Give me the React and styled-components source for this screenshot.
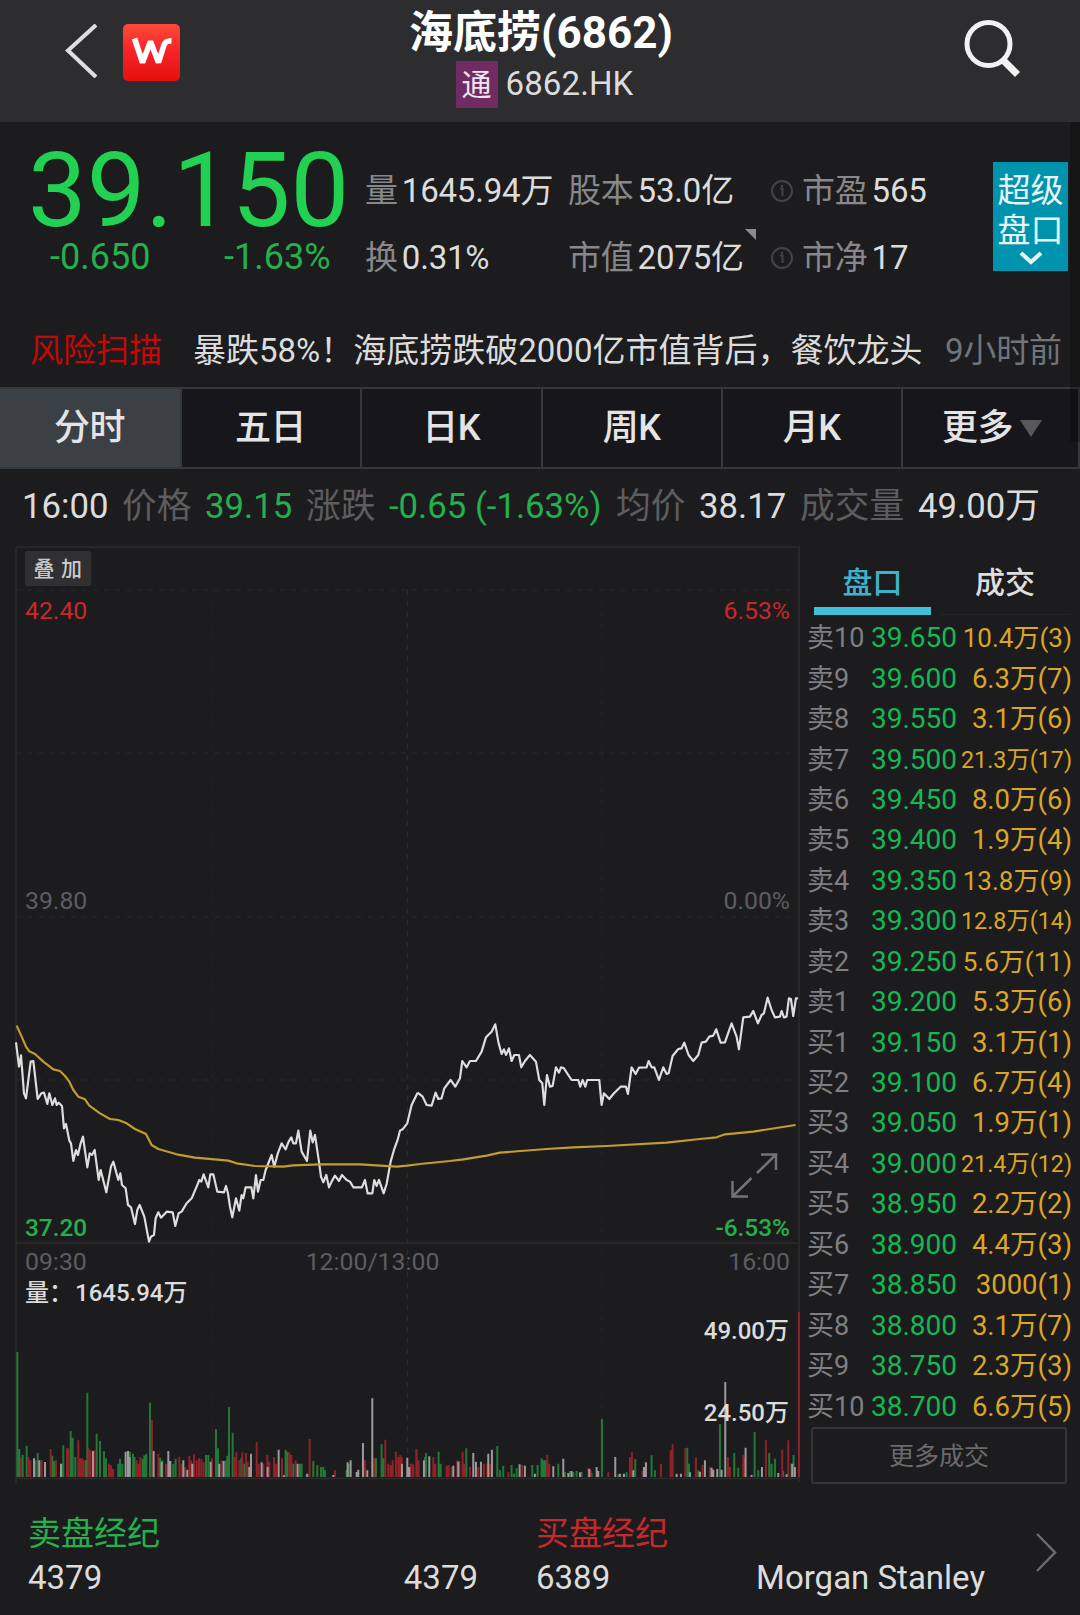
import React from 'react';
import styled, { createGlobalStyle } from 'styled-components';

const GlobalStyle = createGlobalStyle`
  * { box-sizing: border-box; }
  body {
    margin: 0;
    background: #1c1c1e;
    color: #dcdcdd;
    font-family: Roboto, 'Noto Sans CJK SC', sans-serif;
  }
`

const colors = {
  green: '#24b04c',
  red: '#c8282c',
  white: '#dcdcdd',
  grey: '#5d5d5f',
  grid: '#2b2b2d'
}

const Page = styled.div`
  width: 1080px;
  height: 1615px;
  display: flex;
  flex-direction: column;
  position: relative;
  overflow: hidden;
  white-space: nowrap;
`

const ScrollThumb = styled.div`
  position: absolute;
  top: 122px;
  right: 0;
  width: 10px;
  height: 320px;
  background: rgba(0, 0, 0, 0.25);
`

const Header = styled.header`
  height: 122px;
  flex: none;
  display: grid;
  grid-template-columns: 340px 1fr 340px;
  background: #2d2d2f;
`

const HeaderLeft = styled.div`
  display: flex;
  align-items: flex-start;
  padding: 24px 0 0 64px;
  gap: 23px;
`

const Logo = styled.div`
  width: 57px;
  height: 57px;
  border-radius: 5px;
  background: linear-gradient(#fb4c36, #f5222a 50%, #e60f0c);
`

const HeaderCenter = styled.div`
  padding-top: 10px;
  padding-left: 2px;
  display: flex;
  flex-direction: column;
  align-items: center;
`

const Title = styled.h1`
  margin: 0;
  font-size: 44px;
  line-height: 46px;
  font-weight: 700;
  color: #fff;
`

const Ticker = styled.div`
  margin-top: 4px;
  padding-left: 7px;
  display: flex;
  align-items: center;
  gap: 8px;
  font-size: 33px;
  line-height: 48px;
  letter-spacing: 0.1px;
`

const ConnectBadge = styled.span`
  width: 42px;
  height: 47px;
  text-align: center;
  background: #702b62;
  color: #f0e4ee;
  font-size: 30px;
  line-height: 48px;
`

const HeaderRight = styled.div`
  display: flex;
  justify-content: flex-end;
  padding: 17px 57px 0 0;
`

const Quote = styled.section`
  height: 193px;
  flex: none;
  display: grid;
  grid-template-columns: 365px 203px 203px 222px 75px;
`

const PriceBlock = styled.div`
  padding: 14px 0 0 28px;
`

const Price = styled.div`
  font-size: 104.5px;
  line-height: 110px;
  color: #22d152;
`

const Change = styled.div`
  display: grid;
  grid-template-columns: 174px auto;
  padding-left: 22px;
  font-size: 36px;
  line-height: 22px;
  color: ${colors.green};
`

const StatColumn = styled.div`
  padding-top: 35px;
`

const Stat = styled.div`
  display: flex;
  align-items: center;
  position: relative;
  height: 67px;
  font-size: 33px;
  line-height: 40px;
`

const StatLabel = styled.span`
  margin-right: 4px;
  color: #88888b;
  letter-spacing: -0.2px;
`

const StatValue = styled.span`
  letter-spacing: -0.2px;
`

const InfoIcon = styled.svg`
  width: 22px;
  height: 22px;
  margin-right: 9px;
`

const Corner = styled.i`
  position: absolute;
  left: 177px;
  top: 5px;
  border-top: 11px solid #8b8b8d;
  border-left: 11px solid transparent;
`

const SuperBook = styled.div`
  margin-top: 40px;
  height: 109px;
  padding-top: 9px;
  display: flex;
  flex-direction: column;
  align-items: center;
  background: #0093ad;
  color: #e6f6f8;
  font-size: 33px;
  line-height: 40px;
`

const News = styled.section`
  height: 72px;
  flex: none;
  display: grid;
  grid-template-columns: 163px 752px auto;
  padding-left: 30px;
  align-items: center;
  font-size: 33px;
  line-height: 40px;
`

const Risk = styled.span`
  color: #c40806;
`

const NewsTime = styled.span`
  color: #70747b;
  letter-spacing: -0.2px;
`

const Tabs = styled.nav`
  height: 82px;
  flex: none;
  display: grid;
  grid-template-columns: 182px 180px 181px 180px 180px 177px;
  border-top: 2px solid #37373b;
  border-bottom: 2px solid #37373b;
`

const Tab = styled.div`
  display: flex;
  align-items: center;
  justify-content: center;
  gap: 7px;
  padding-right: ${({ more }) => more ? 0 : 1}px;
  padding-left: ${({ more }) => more ? 3 : 0}px;
  border-right: 2px solid #37373b;
  background: ${({ active }) => active ? '#3b4044' : '#17171b'};
  color: #e4e4e5;
  font-size: 36px;
  line-height: 40px;
  font-weight: 500;
  letter-spacing: -0.5px;
`

const Caret = styled.i`
  border: 11px solid transparent;
  border-top: 17px solid #58585b;
  border-bottom: 0;
`

const Readout = styled.section`
  height: 71px;
  flex: none;
  display: grid;
  grid-template-columns: 100px 83px 101px 83px 86px 141px 83px 101px 118px auto;
  align-items: center;
  padding: 3px 0 0 22px;
  font-size: 34.7px;
  line-height: 40px;
`

const ReadoutItem = styled.span`
  color: ${({ color }) => color || colors.white};
`

const Main = styled.main`
  height: 960px;
  flex: none;
  display: grid;
  grid-template-columns: 806px 274px;
`

const Plot = styled.svg`
  width: 806px;
  height: 960px;
  display: block;
  font-size: 24.8px;
`

const Book = styled.div`
  padding-top: 14px;
`

const BookTabs = styled.div`
  display: grid;
  grid-template-columns: 117px 130px;
  column-gap: 9px;
  margin-left: 8px;
  height: 64px;
`

const BookTab = styled.div`
  height: 61px;
  text-align: center;
  font-size: 30px;
  line-height: 57px;
  font-weight: 500;
  color: ${({ active }) => active ? '#3fb2c9' : '#dededf'};
  border-bottom: ${({ active }) => active ? '8px solid #41bfd6' : '1px solid #242426'};
`

const BookRow = styled.div`
  display: grid;
  grid-template-columns: 64px 87px 1fr;
  align-items: center;
  height: 40.45px;
  line-height: 40px;
  padding: 0 8px 0 1px;
`

const Level = styled.span`
  font-size: 27px;
  color: #7f7f82;
`

const LevelPrice = styled.span`
  font-size: 28px;
  color: #14b852;
`

const LevelSize = styled.span`
  text-align: right;
  font-size: ${({ len }) => len > 8 ? 23.3 : len > 7 ? 26 : 27.5}px;
  color: #dba525;
`

const MoreTrades = styled.div`
  width: 256px;
  height: 57px;
  margin: 0 0 0 5px;
  border: 2px solid #343538;
  border-radius: 3px;
  text-align: center;
  font-size: 25px;
  line-height: 56px;
  color: #6a6a6d;
`

const Brokers = styled.footer`
  flex: 1;
  display: grid;
  grid-template-columns: 450px 449px 1fr;
  column-gap: 58px;
  padding-left: 28px;
  padding-top: 12px;
  font-size: 33px;
`

const BrokerTitle = styled.div`
  line-height: 44px;
  color: ${({ color }) => color};
`

const BrokerNames = styled.div`
  display: flex;
  justify-content: space-between;
  line-height: 44px;
`

const NextIcon = styled.svg`
  width: 22px;
  height: 40px;
  margin-top: 21px;
  margin-left: -8px;
`

const asks = [
  ['卖10', '39.650', '10.4万(3)'],
  ['卖9', '39.600', '6.3万(7)'],
  ['卖8', '39.550', '3.1万(6)'],
  ['卖7', '39.500', '21.3万(17)'],
  ['卖6', '39.450', '8.0万(6)'],
  ['卖5', '39.400', '1.9万(4)'],
  ['卖4', '39.350', '13.8万(9)'],
  ['卖3', '39.300', '12.8万(14)'],
  ['卖2', '39.250', '5.6万(11)'],
  ['卖1', '39.200', '5.3万(6)']
]

const bids = [
  ['买1', '39.150', '3.1万(1)'],
  ['买2', '39.100', '6.7万(4)'],
  ['买3', '39.050', '1.9万(1)'],
  ['买4', '39.000', '21.4万(12)'],
  ['买5', '38.950', '2.2万(2)'],
  ['买6', '38.900', '4.4万(3)'],
  ['买7', '38.850', '3000(1)'],
  ['买8', '38.800', '3.1万(7)'],
  ['买9', '38.750', '2.3万(3)'],
  ['买10', '38.700', '6.6万(5)']
]

// series are kept in thirds of a pixel, morning and afternoon apart
const priceMorning = '48,187 57,260 63,226 72,340 78,355 92,245 100,243 113,357 124,340 132,338 142,372 148,340 157,375 165,355 170,375 176,368 186,378 192,445 198,432 208,482 213,490 220,543 228,510 234,525 242,490 249,470 262,562 269,520 276,525 284,510 296,600 302,570 319,637 333,560 340,545 355,600 361,580 366,615 377,625 384,675 393,682 405,732 412,690 419,675 433,710 447,785 453,770 462,765 467,715 475,697 483,713 500,695 518,697 526,738 536,700 545,695 560,670 575,655 590,620 598,600 604,605 611,583 625,622 631,583 640,583 652,635 672,637 678,618 684,640 690,680 697,712 708,655 718,692 725,645 730,655 737,622 754,622 760,655 768,585 774,635 782,600 790,600 797,570 815,525 823,560 833,522 845,490 857,508 866,485 874,472 880,490 888,490 895,452 905,515 921,543 931,452 938,487 945,465 957,545 963,590 970,607 979,585 987,622 995,605 1005,587 1017,603 1026,585 1040,600 1050,605 1060,622 1086,622 1095,600 1103,640 1117,640 1123,600 1130,618 1137,600 1151,640 1160,612 1172,545 1182,510 1193,480 1200,452 1208,448 1222,430 1235,375 1253,338'
const priceAfternoon = '53,338 68,350 80,375 95,377 107,338 115,357 125,355 133,325 152,300 166,320 180,295 187,243 200,262 210,243 228,243 245,215 258,172 275,155 286,133 295,185 305,222 312,208 318,225 327,205 335,243 343,225 357,225 364,262 375,243 390,225 408,245 418,300 427,310 433,375 441,285 450,320 458,318 468,262 477,278 483,262 492,265 515,300 535,300 541,320 548,300 556,320 562,300 598,300 605,375 612,340 628,357 640,342 662,320 678,320 684,342 695,262 707,282 717,263 740,262 746,243 755,262 763,262 777,300 790,262 800,282 806,280 818,228 835,207 845,205 853,188 866,225 880,243 895,225 905,188 918,185 928,170 940,167 949,148 962,188 975,187 995,130 1010,170 1017,208 1030,112 1050,110 1060,93 1074,130 1085,105 1092,100 1103,53 1115,90 1125,112 1140,110 1145,93 1152,112 1160,110 1167,55 1173,57 1180,108 1188,55 1194,55'
const averageMorning = '50,137 65,170 78,200 88,214 105,222 130,245 160,268 180,273 195,288 208,305 220,330 235,350 255,358 268,377 300,400 330,417 355,420 380,430 405,447 438,462 455,495 475,507 530,523 585,533 685,542 710,550 765,558 850,560 880,556 960,553 1080,553 1190,560 1222,557 1260,552'
const averageAfternoon = '60,552 150,543 190,538 260,527 300,518 440,507 520,502 620,498 800,488 900,477 950,472 975,463 1060,455 1187,435'

const volume = [
  {
    color: '#237f39',
    morning: '52,375 58,84 68,66 80,94 113,72 106,50 157,64 163,48 186,40 190,95 212,138 218,118 226,60 257,50 262,253 290,130 300,108 312,77 318,56 355,40 360,55 367,40 390,76 399,70 404,60 428,55 433,65 439,70 450,223 480,58 487,50 520,40 527,55 618,66 625,66 648,143 654,86 678,50 682,64 687,210 698,133 724,56 733,40 857,82 862,76 880,40 899,40 905,40 920,8 940,48 952,36 963,30 970,30 975,20 1040,20 1046,40 1128,56 1145,98 1151,56',
    afternoon: '75,60 78,72 116,76 122,40 199,86 292,93 300,20 310,34 335,36 342,10 350,26 397,36 413,36 425,56 431,50 437,50 475,40 495,15 510,18 520,15 530,18 545,15 575,12 606,174 655,8 680,14 706,54 755,65 765,20 862,88 867,40 895,20 960,158 1003,72 1015,28 1064,135 1075,20 1108,72 1115,40 1125,55 1150,18 1175,40 1181,66'
  },
  {
    color: '#952329',
    morning: '63,60 85,60 91,50 125,50 152,84 168,50 201,86 206,86 235,110 241,56 246,56 251,50 266,86 272,80 284,80 327,40 333,36 339,24 410,50 415,40 421,60 456,170 475,70 498,40 538,60 545,40 555,30 568,64 573,50 582,68 590,50 597,56 604,54 611,46 636,56 665,50 703,60 709,74 718,50 727,74 738,72 743,46 770,104 776,40 790,40 802,66 808,46 822,60 828,40 846,56 868,74 874,66 887,50 929,114 1005,20 1095,50 1122,56 1156,112 1165,40 1172,36 1178,50 1188,76 1195,60 1201,66 1232,40 1239,40 1250,84 1256,50',
    afternoon: '5,60 40,30 49,84 55,40 100,60 106,40 140,34 146,36 155,30 172,50 178,48 188,76 194,40 210,30 235,30 252,40 262,40 270,40 325,15 367,36 442,66 448,40 565,26 572,22 625,14 690,60 696,74 728,18 783,40 812,80 818,98 856,86 888,60 908,36 930,30 984,60 990,30 1030,66 1035,56 1098,110 1147,82 1165,110 1197,495'
  },
  {
    color: '#a3a0a2',
    morning: '102,56 118,50 135,45 183,40 279,78 377,76 384,78 389,60 461,78 485,46 505,78 511,48 550,50 562,22 577,40 632,46 658,40 671,48 748,30 753,70 785,44 803,30 836,82 852,5 893,40 922,10 1000,6 1043,44 1052,50 1070,15 1075,22 1089,102 1102,20 1117,236 1206,40 1222,58',
    afternoon: '28,30 88,62 72,50 175,46 160,34 220,72 228,46 243,46 265,70 276,82 359,38 375,34 405,10 460,32 490,55 505,12 515,18 540,14 568,25 590,30 595,18 646,60 660,10 672,10 700,20 738,44 732,30 830,10 843,10 870,14 900,16 915,50 935,28 940,22 952,24 965,22 976,285 1037,88 1055,6 1086,30 1135,12 1160,8 1177,40 1185,30'
  }
]

const barsPath = (points, offset) => points.split(' ').map((point) => {
  const [x, height] = point.split(',').map(Number)
  return `M${x + offset} 0v${-height}`
}).join('')

const Chart = () => (
  <Plot viewBox='0 540 806 960'>
    <g fill='none' stroke={colors.grid} strokeWidth='1.5'>
      <path d='M16 547H799V1482M16 547V1484M16 1243H799M16 1478.5H799'/>
      <path strokeDasharray='5 6' d='M16 590H799M16 753H799M16 917H799M16 1080H799' opacity='.6'/>
      <path strokeDasharray='5 6' d='M407.5 590V1478'/>
      <path strokeDasharray='5 6' d='M212.5 590V1478M602 590V1478' opacity='.45'/>
    </g>
    <g transform='translate(0 1477) scale(.3333)' strokeWidth='6' opacity='.95'>
      {volume.map(({ color, morning, afternoon }) => (
        <path key={color} stroke={color} d={barsPath(morning, 0) + barsPath(afternoon, 1200)}/>
      ))}
    </g>
    <g transform='translate(0 980) scale(.3333)' fill='none' strokeWidth='6.5' strokeLinejoin='round'>
      <g stroke='#dededf'>
        <polyline points={priceMorning}/>
        <polyline points={priceAfternoon} transform='translate(1200)'/>
      </g>
      <g stroke='#c39c30'>
        <polyline points={averageMorning}/>
        <polyline points={averageAfternoon} transform='translate(1200)'/>
      </g>
    </g>
    <rect x='25' y='551' width='66' height='35' rx='2' fill='#303033'/>
    <text x='33.5' y='575.5' fontSize='21' fontWeight='500' fill='#c9c9ca'>叠</text>
    <text x='61' y='575.5' fontSize='21' fontWeight='500' fill='#c9c9ca'>加</text>
    <text x='25' y='619' fill={colors.red}>42.40</text>
    <text x='790' y='619' textAnchor='end' fill={colors.red}>6.53%</text>
    <text x='25' y='908.5' fill={colors.grey}>39.80</text>
    <text x='790' y='908.5' textAnchor='end' fill={colors.grey}>0.00%</text>
    <g fontSize='24.4' fontWeight='500' fill={colors.green}>
      <text x='25' y='1236'>37.20</text>
      <text x='790' y='1236' textAnchor='end'>-6.53%</text>
    </g>
    <text x='25' y='1269.5' fill={colors.grey}>09:30</text>
    <text x='372.5' y='1269.5' textAnchor='middle' fill={colors.grey}>12:00/13:00</text>
    <text x='790' y='1269.5' textAnchor='end' fill={colors.grey}>16:00</text>
    <g fontSize='24' fontWeight='500' fill={colors.white}>
      <text x='25' y='1300.5'>量：</text>
      <text x='75' y='1300.5'>1645.94万</text>
      <text x='789' y='1339' textAnchor='end'>49.00万</text>
      <text x='789' y='1421' textAnchor='end'>24.50万</text>
    </g>
    <path d='M761 1154.500H776V1170M776 1154.500L757 1173M732.500 1181V1196.500H748M732.500 1196.500L751.500 1178' fill='none' stroke='#737375' strokeWidth='2.5'/>
  </Plot>
)

const OrderBook = () => (
  <Book>
    <BookTabs>
      <BookTab active='true'>盘口</BookTab>
      <BookTab>成交</BookTab>
    </BookTabs>
    {[...asks, ...bids].map(([level, price, size]) => (
      <BookRow key={level}>
        <Level>{level}</Level>
        <LevelPrice>{price}</LevelPrice>
        <LevelSize len={size.length}>{size}</LevelSize>
      </BookRow>
    ))}
    <MoreTrades>更多成交</MoreTrades>
  </Book>
)

const Info = () => (
  <InfoIcon viewBox='0 0 22 22' fill='none' stroke='#444446' strokeWidth='2'>
    <circle cx='11' cy='11' r='10'/>
    <path d='M9 8.500h2.500V16M11 5v2'/>
  </InfoIcon>
)

const App = () => (
  <Page>
    <GlobalStyle/>
    <Header>
      <HeaderLeft>
        <svg width='36' height='54' viewBox='0 0 36 54' fill='none' stroke='#dedede' strokeWidth='4'>
          <path d='M32 1L4 26.500L32 53'/>
        </svg>
        <Logo>
          <svg width='57' height='57' viewBox='0 0 57 57' fill='none' stroke='#fff'>
            <path d='M11.500 14.500L19.500 38.500L27.500 17.500L35.500 38.500L41 21Q42.500 16.800 48.500 16.800' strokeWidth='5.6' strokeLinejoin='bevel'/>
          </svg>
        </Logo>
      </HeaderLeft>
      <HeaderCenter>
        <Title>海底捞(6862)</Title>
        <Ticker><ConnectBadge>通</ConnectBadge>6862.HK</Ticker>
      </HeaderCenter>
      <HeaderRight>
        <svg width='60' height='62' viewBox='0 0 60 62' fill='none' stroke='#f2f2f2'>
          <circle cx='25.500' cy='27' r='21.500' strokeWidth='5'/>
          <path d='M40 43L54.500 57.500' strokeWidth='7'/>
        </svg>
      </HeaderRight>
    </Header>
    <Quote>
      <PriceBlock>
        <Price>39.150</Price>
        <Change><span>-0.650</span><span>-1.63%</span></Change>
      </PriceBlock>
      <StatColumn>
        <Stat><StatLabel>量</StatLabel><StatValue>1645.94万</StatValue></Stat>
        <Stat><StatLabel>换</StatLabel><StatValue>0.31%</StatValue></Stat>
      </StatColumn>
      <StatColumn>
        <Stat><StatLabel>股本</StatLabel><StatValue>53.0亿</StatValue></Stat>
        <Stat><StatLabel>市值</StatLabel><StatValue>2075亿</StatValue><Corner/></Stat>
      </StatColumn>
      <StatColumn>
        <Stat><Info/><StatLabel>市盈</StatLabel><StatValue>565</StatValue></Stat>
        <Stat><Info/><StatLabel>市净</StatLabel><StatValue>17</StatValue></Stat>
      </StatColumn>
      <SuperBook>
        <span>超级</span>
        <span>盘口</span>
        <svg width='24' height='14' viewBox='0 0 24 14' fill='none' stroke='#e6f6f8' strokeWidth='4'>
          <path d='M2 2L12 11L22 2'/>
        </svg>
      </SuperBook>
    </Quote>
    <News>
      <Risk>风险扫描</Risk>
      <span>暴跌58%！海底捞跌破2000亿市值背后，餐饮龙头</span>
      <NewsTime>9小时前</NewsTime>
    </News>
    <Tabs>
      <Tab active='true'>分时</Tab>
      <Tab>五日</Tab>
      <Tab>日K</Tab>
      <Tab>周K</Tab>
      <Tab>月K</Tab>
      <Tab more='true'>更多<Caret/></Tab>
    </Tabs>
    <Readout>
      <ReadoutItem>16:00</ReadoutItem>
      <ReadoutItem color={colors.grey}>价格</ReadoutItem>
      <ReadoutItem color={colors.green}>39.15</ReadoutItem>
      <ReadoutItem color={colors.grey}>涨跌</ReadoutItem>
      <ReadoutItem color={colors.green}>-0.65</ReadoutItem>
      <ReadoutItem color={colors.green}>(-1.63%)</ReadoutItem>
      <ReadoutItem color={colors.grey}>均价</ReadoutItem>
      <ReadoutItem>38.17</ReadoutItem>
      <ReadoutItem color={colors.grey}>成交量</ReadoutItem>
      <ReadoutItem>49.00万</ReadoutItem>
    </Readout>
    <Main>
      <Chart/>
      <OrderBook/>
    </Main>
    <Brokers>
      <div>
        <BrokerTitle color={colors.green}>卖盘经纪</BrokerTitle>
        <BrokerNames><span>4379</span><span>4379</span></BrokerNames>
      </div>
      <div>
        <BrokerTitle color={colors.red}>买盘经纪</BrokerTitle>
        <BrokerNames><span>6389</span><span>Morgan Stanley</span></BrokerNames>
      </div>
      <NextIcon viewBox='0 0 22 40' fill='none' stroke='#6b6b6d' strokeWidth='2.5'>
        <path d='M2 1L20 19.500L2 38'/>
      </NextIcon>
    </Brokers>
    <ScrollThumb/>
  </Page>
)

export default App;
